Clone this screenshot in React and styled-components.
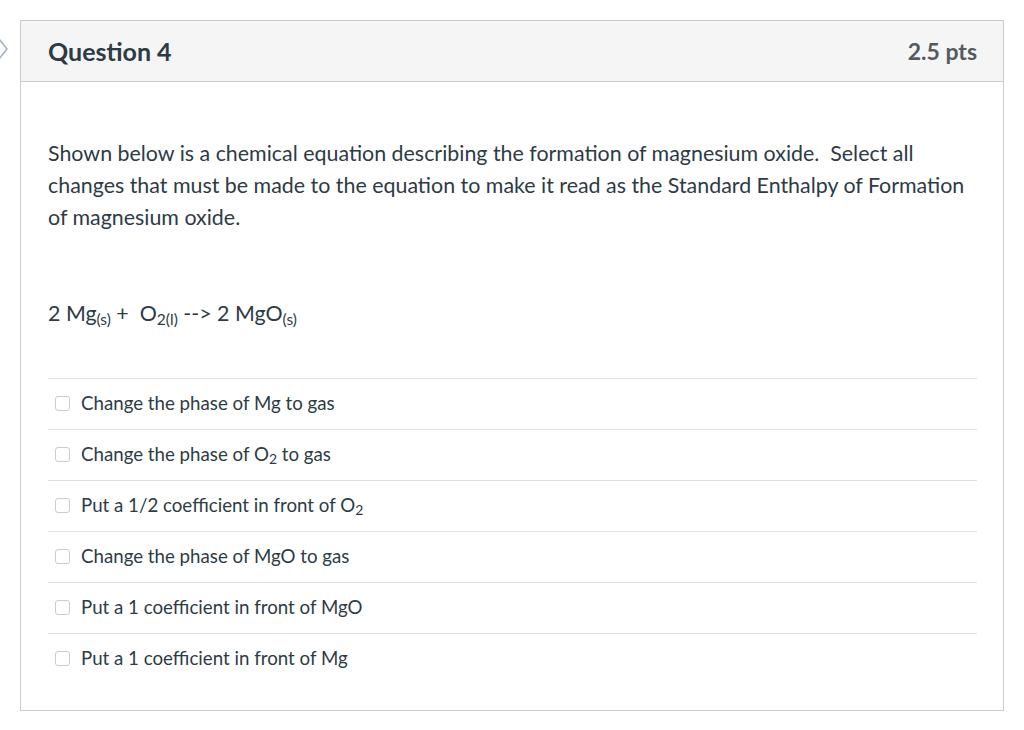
import React from 'react';
import styled, { createGlobalStyle } from 'styled-components';

const GlobalStyle = createGlobalStyle`
  body {
    margin: 0;
    background: #fff;
    font-family: Lato, "Open Sans", sans-serif;
    color: #2d3b45;
  }
`;

const Page = styled.div`
  display: flex;
  align-items: flex-start;
  padding: 20px 20px 0 0;
`;

const Chevron = styled.svg`
  width: 20px;
  height: 60px;
  flex: none;
`;

const Card = styled.div`
  flex: 1;
  border: 1px solid #c7cdd1;
  height: 691px;
  box-sizing: border-box;
`;

const Header = styled.div`
  display: flex;
  justify-content: space-between;
  align-items: center;
  height: 60px;
  padding: 0 26px 0 27px;
  background: #f5f5f5;
  border-bottom: 1px solid #c7cdd1;
`;

const Title = styled.h2`
  margin: 0;
  font-size: 25px;
  font-weight: 700;
  color: #2d3b45;
`;

const Points = styled.div`
  font-size: 23px;
  font-weight: 700;
  color: #565a5c;
`;

const Body = styled.div`
  padding: 55px 26px 0 27px;
`;

const Text = styled.p`
  margin: 0;
  font-size: 21.4px;
  line-height: 32px;
`;

const Equation = styled(Text)`
  margin-top: 64px;
  sub {
    font-size: 15.5px;
    vertical-align: -4px;
    line-height: 0;
  }
`;

const Answers = styled.div`
  margin-top: 49px;
`;

const Row = styled.label`
  display: flex;
  align-items: center;
  height: 47px;
  padding-bottom: 3px;
  border-top: 1px solid #dde1e4;
  font-size: 18.7px;
`;

const Box = styled.span`
  width: 13px;
  height: 13px;
  border: 1px solid #c7cdd1;
  border-radius: 3px;
  margin: 2px 11px 0 7px;
  background: #fff;
  flex: none;
`;

const Sub = styled.sub`
  font-size: 14px;
  vertical-align: -3px;
  line-height: 0;
`;

const answers = [
  <>Change the phase of Mg to gas</>,
  <>Change the phase of O<Sub>2</Sub> to gas</>,
  <>Put a 1/2 coefficient in front of O<Sub>2</Sub></>,
  <>Change the phase of MgO to gas</>,
  <>Put a 1 coefficient in front of MgO</>,
  <>Put a 1 coefficient in front of Mg</>,
];

export default function App() {
  return (
    <>
      <GlobalStyle />
      <Page>
        <Chevron viewBox="0 0 20 60">
          <path d="M-1 19 L7 29 L-1 39" fill="none" stroke="#9fb1c2" strokeWidth="1.5" />
        </Chevron>
        <Card>
          <Header>
            <Title>Question 4</Title>
            <Points>2.5 pts</Points>
          </Header>
          <Body>
            <Text>
              Shown below is a chemical equation describing the formation of magnesium oxide.&nbsp; Select all
              changes that must be made to the equation to make it read as the Standard Enthalpy of Formation
              of magnesium oxide.
            </Text>
            <Equation>
              2 Mg<sub>(s)</sub> +&nbsp; O<sub>2(l)</sub> --&gt; 2 MgO<sub>(s)</sub>
            </Equation>
            <Answers>
              {answers.map((a, i) => (
                <Row key={i}>
                  <Box />
                  <span>{a}</span>
                </Row>
              ))}
            </Answers>
          </Body>
        </Card>
      </Page>
    </>
  );
}
